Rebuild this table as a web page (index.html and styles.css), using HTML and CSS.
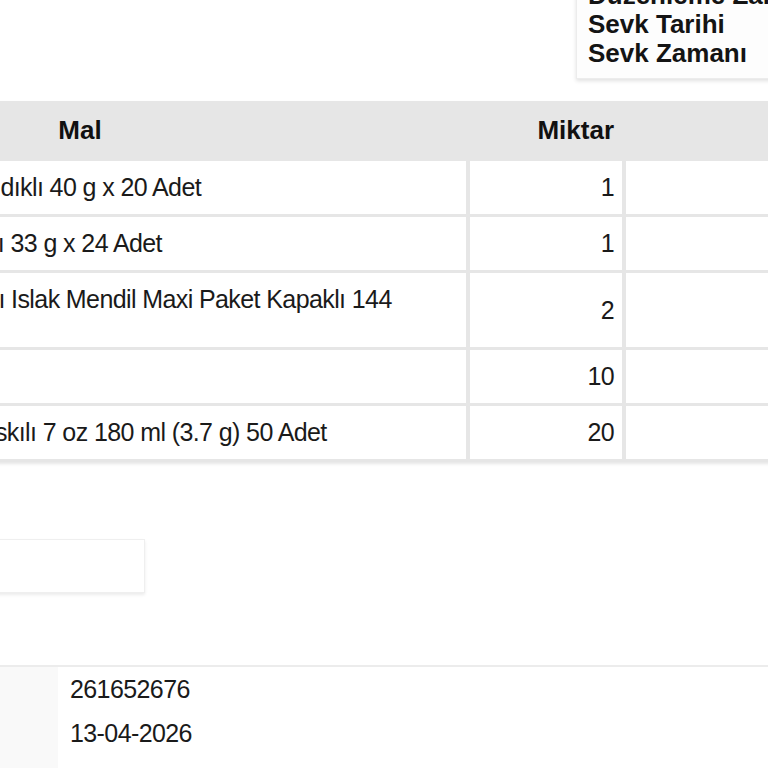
FILE: index.html
```html
<!DOCTYPE html>
<html lang="tr">
<head>
<meta charset="utf-8">
<title>e-Arşiv Fatura</title>
<link rel="stylesheet" href="styles.css">
</head>
<body>
<div class="page">
  <header class="top">
    <div class="info">
      <div>Düzenleme Zamanı</div>
      <div>Sevk Tarihi</div>
      <div>Sevk Zamanı</div>
    </div>
  </header>

  <table class="items">
    <colgroup>
      <col class="c-mal">
      <col class="c-qty">
      <col class="c-price">
    </colgroup>
    <thead>
      <tr><th class="mal">Mal</th><th class="num">Miktar</th><th class="num">Birim Fiyat</th></tr>
    </thead>
    <tbody>
      <tr><td>Ülker Çokonat Karamelli Fındıklı 40 g x 20 Adet</td><td class="num">1</td><td class="num">189,90</td></tr>
      <tr><td>Ülker Dido Jr Sütlü Çikolatalı 33 g x 24 Adet</td><td class="num">1</td><td class="num">214,50</td></tr>
      <tr><td>Sleepy Sensitive Cilt Bakımlı Islak Mendil Maxi Paket Kapaklı 144<br>Yaprak</td><td class="num">2</td><td class="num">89,90</td></tr>
      <tr><td>Kürdan</td><td class="num">10</td><td class="num">12,50</td></tr>
      <tr><td>Çift Kağıt Karton Bardak Baskılı 7 oz 180 ml (3.7 g) 50 Adet</td><td class="num">20</td><td class="num">64,90</td></tr>
    </tbody>
  </table>

  <div class="summary">Ödeme Bilgileri</div>

  <table class="meta">
    <tr><th>Sipariş No</th><td>261652676</td></tr>
    <tr><th>Sipariş Tarihi</th><td>13-04-2026</td></tr>
    <tr><th>Not</th><td></td></tr>
  </table>
</div>
</body>
</html>
```

FILE: styles.css
```css
html, body {
  margin: 0;
  padding: 0;
  background: #ffffff;
}

body {
  overflow: hidden;
  font-family: "Liberation Sans", Arial, sans-serif;
  color: #1a1a1a;
}

.page {
  width: 1400px;
  margin: -30px 0 0 -306px;
}

.top {
  display: flex;
  padding-left: 882px;
}

.info {
  width: 320px;
  padding: 10px 11px 10px;
  border: 1px solid #ececec;
  background: #fdfdfd;
  box-shadow: 0 2px 4px rgba(0, 0, 0, 0.12);
  font-size: 26px;
  font-weight: bold;
  line-height: 29px;
  white-space: nowrap;
  color: #141414;
}

.items {
  margin-top: 22px;
  width: 1232px;
  table-layout: fixed;
  border-collapse: separate;
  border-spacing: 0;
  box-shadow: 0 2px 3px rgba(0, 0, 0, 0.10);
}

.c-mal { width: 776px; }
.c-qty { width: 156px; }
.c-price { width: 300px; }

.items th {
  background: #e6e6e6;
  padding: 16px 8px 17px;
  line-height: 27px;
  font-size: 26px;
  font-weight: bold;
  color: #111;
  border-right: 4px solid #e6e6e6;
}

.items th.mal { text-align: center; }

.items td {
  padding: 16px 8px 16px 10px;
  line-height: 21px;
  font-size: 25px;
  letter-spacing: -0.6px;
  border-right: 4px solid #e6e6e6;
  border-bottom: 3px solid #e6e6e6;
  vertical-align: top;
  background: #fff;
}

.items .num {
  text-align: right;
  padding-right: 8px;
}

.items td.num { vertical-align: middle; }

.summary {
  margin-top: 77px;
  width: 451px;
  height: 54px;
  box-sizing: border-box;
  padding: 12px;
  border: 1px solid #efefef;
  box-shadow: 0 2px 3px rgba(0, 0, 0, 0.08);
  font-size: 25px;
  line-height: 28px;
  color: #1a1a1a;
}

.meta {
  margin-top: 72px;
  width: 1400px;
  border-collapse: collapse;
  border-top: 2px solid #ececec;
}

.meta th {
  width: 364px;
  background: #f9f9f9;
  text-align: left;
  padding: 0 12px;
  font-size: 25px;
  font-weight: normal;
  box-sizing: border-box;
}

.meta td {
  height: 44px;
  padding: 0 12px;
  font-size: 25px;
  letter-spacing: -0.6px;
  line-height: 44px;
}
```
